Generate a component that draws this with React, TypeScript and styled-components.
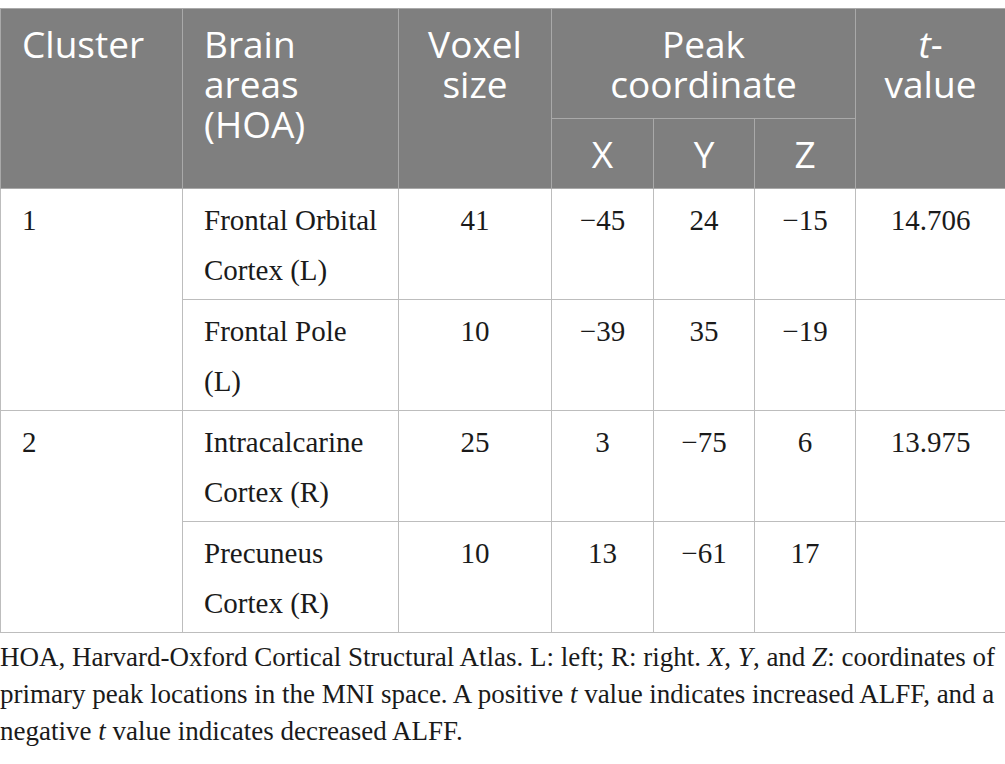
import React from "react";
import styled, { createGlobalStyle } from "styled-components";

const Global = createGlobalStyle`
  html, body { margin: 0; padding: 0; background: #ffffff; }
  body { font-family: "Liberation Serif", "Times New Roman", serif; color: #1a1a1a; }
`;

const Page = styled.div`
  padding-top: 8px;
  width: 1005px;
`;

const Table = styled.table`
  width: 1005px;
  border-collapse: collapse;
  table-layout: fixed;
`;

const HeadCell = styled.th<{ $align?: "left" | "center"; $sub?: boolean }>`
  background: #7f7f7f;
  color: #ffffff;
  font-family: "Open Sans", "DejaVu Sans", sans-serif;
  font-weight: 400;
  font-size: 37px;
  line-height: 40px;
  text-align: ${(p) => p.$align ?? "center"};
  vertical-align: ${(p) => (p.$sub ? "middle" : "top")};
  padding: 15px 21px 14px 21px;
  border: 1px solid #a9a9a9;
  white-space: nowrap;
  & i { font-style: italic; }
`;

const Cell = styled.td<{ $align?: "left" | "center" }>`
  font-family: "Liberation Serif", "Times New Roman", serif;
  font-size: 29px;
  line-height: 50px;
  color: #1a1a1a;
  text-align: ${(p) => p.$align ?? "center"};
  vertical-align: top;
  padding: 6px 21px 4px 21px;
  border: 1px solid #bdbdbd;
  white-space: nowrap;
`;

const Caption = styled.p`
  margin: 6px 0 0 0;
  font-family: "Liberation Serif", "Times New Roman", serif;
  font-size: 27px;
  line-height: 37px;
  color: #1a1a1a;
  & i { font-style: italic; }
`;

type Row = { area: string[]; voxel: string; x: string; y: string; z: string; t: string };
type Group = { cluster: string; rows: Row[] };

const groups: Group[] = [
  {
    cluster: "1",
    rows: [
      { area: ["Frontal Orbital", "Cortex (L)"], voxel: "41", x: "\u221245", y: "24", z: "\u221215", t: "14.706" },
      { area: ["Frontal Pole", "(L)"], voxel: "10", x: "\u221239", y: "35", z: "\u221219", t: "" },
    ],
  },
  {
    cluster: "2",
    rows: [
      { area: ["Intracalcarine", "Cortex (R)"], voxel: "25", x: "3", y: "\u221275", z: "6", t: "13.975" },
      { area: ["Precuneus", "Cortex (R)"], voxel: "10", x: "13", y: "\u221261", z: "17", t: "" },
    ],
  },
];

export default function App() {
  return (
    <Page>
      <Global />
      <Table>
        <colgroup>
          <col style={{ width: 182 }} />
          <col style={{ width: 216 }} />
          <col style={{ width: 153 }} />
          <col style={{ width: 102 }} />
          <col style={{ width: 101 }} />
          <col style={{ width: 101 }} />
          <col style={{ width: 150 }} />
        </colgroup>
        <thead>
          <tr>
            <HeadCell rowSpan={2} $align="left">Cluster</HeadCell>
            <HeadCell rowSpan={2} $align="left">Brain<br />areas<br />(HOA)</HeadCell>
            <HeadCell rowSpan={2}>Voxel<br />size</HeadCell>
            <HeadCell colSpan={3}>Peak<br />coordinate</HeadCell>
            <HeadCell rowSpan={2}><i>t</i>-<br />value</HeadCell>
          </tr>
          <tr>
            <HeadCell $sub>X</HeadCell>
            <HeadCell $sub>Y</HeadCell>
            <HeadCell $sub>Z</HeadCell>
          </tr>
        </thead>
        <tbody>
          {groups.map((g) =>
            g.rows.map((r, i) => (
              <tr key={g.cluster + "-" + i}>
                {i === 0 && (
                  <Cell rowSpan={g.rows.length} $align="left">
                    {g.cluster}
                  </Cell>
                )}
                <Cell $align="left">
                  {r.area[0]}
                  <br />
                  {r.area[1]}
                </Cell>
                <Cell>{r.voxel}</Cell>
                <Cell>{r.x}</Cell>
                <Cell>{r.y}</Cell>
                <Cell>{r.z}</Cell>
                <Cell>{r.t}</Cell>
              </tr>
            ))
          )}
        </tbody>
      </Table>
      <Caption>
        HOA, Harvard-Oxford Cortical Structural Atlas. L: left; R: right. <i>X</i>, <i>Y</i>, and <i>Z</i>: coordinates of
        primary peak locations in the MNI space. A positive <i>t</i> value indicates increased ALFF, and a negative{" "}
        <i>t</i> value indicates decreased ALFF.
      </Caption>
    </Page>
  );
}
